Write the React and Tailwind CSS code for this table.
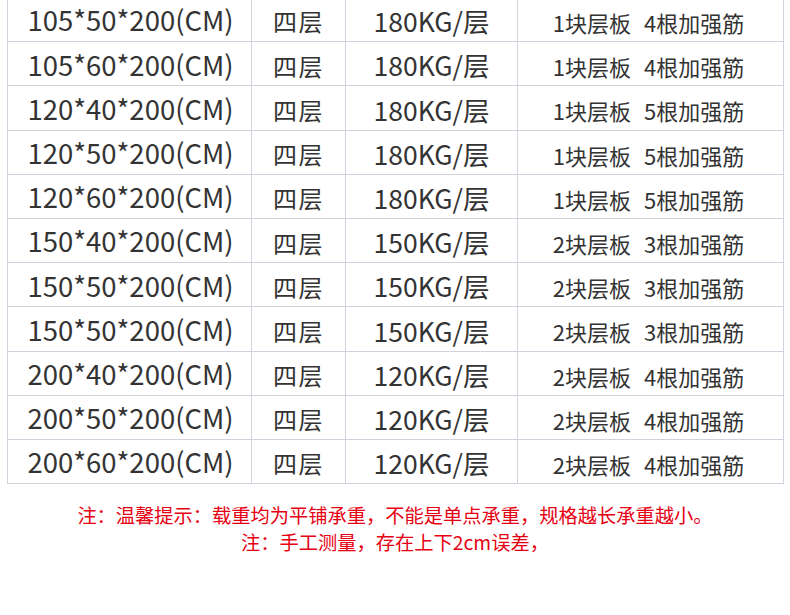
const rows = [
  ["105*50*200(CM)", "四层", "180KG/层", "1块层板", "4根加强筋"],
  ["105*60*200(CM)", "四层", "180KG/层", "1块层板", "4根加强筋"],
  ["120*40*200(CM)", "四层", "180KG/层", "1块层板", "5根加强筋"],
  ["120*50*200(CM)", "四层", "180KG/层", "1块层板", "5根加强筋"],
  ["120*60*200(CM)", "四层", "180KG/层", "1块层板", "5根加强筋"],
  ["150*40*200(CM)", "四层", "150KG/层", "2块层板", "3根加强筋"],
  ["150*50*200(CM)", "四层", "150KG/层", "2块层板", "3根加强筋"],
  ["150*50*200(CM)", "四层", "150KG/层", "2块层板", "3根加强筋"],
  ["200*40*200(CM)", "四层", "120KG/层", "2块层板", "4根加强筋"],
  ["200*50*200(CM)", "四层", "120KG/层", "2块层板", "4根加强筋"],
  ["200*60*200(CM)", "四层", "120KG/层", "2块层板", "4根加强筋"],
];

export default function App() {
  return (
    <div
      className="w-[790px] h-[615px] bg-white overflow-hidden"
      style={{ fontFamily: '"Noto Sans CJK SC", "Noto Sans", sans-serif' }}
    >
      {/* spec table, first row runs off the top edge */}
      <div className="ml-[7px] w-[777px] -mt-[3px] border-l border-r border-b border-[#cfd3dd] text-[#333]">
        {rows.map((r, i) => (
          <div
            key={i}
            className={`flex h-[44.2px] ${i > 0 ? "border-t border-[#cfd3dd]" : ""}`}
          >
            <div className="w-[243px] flex items-center justify-center text-[27.5px] pt-[1px] pl-[2px]">
              {r[0]}
            </div>
            <div className="w-[94px] flex items-center justify-center border-l border-[#cfd3dd] text-[24px] tracking-[1.5px] pt-[4px]">
              {r[1]}
            </div>
            <div className="w-[172px] flex items-center justify-center border-l border-[#cfd3dd] text-[26.5px] pt-[3px]">
              {r[2]}
            </div>
            <div className="flex-1 flex items-center justify-center gap-[13px] border-l border-[#cfd3dd] text-[22px] pt-[6px] pr-[4px]">
              <span>{r[3]}</span>
              <span>{r[4]}</span>
            </div>
          </div>
        ))}
      </div>

      <div className="mt-[18px] text-center text-[#e60012] text-[19.25px] leading-[27px]">
        <p>注：温馨提示：载重均为平铺承重，不能是单点承重，规格越长承重越小。</p>
        <p>注：手工测量，存在上下2cm误差，</p>
      </div>
    </div>
  );
}
